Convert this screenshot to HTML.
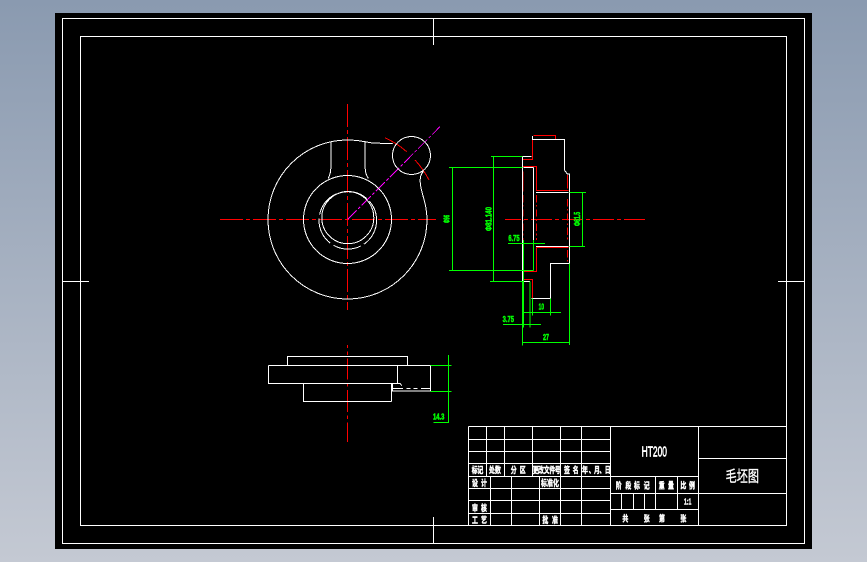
<!DOCTYPE html>
<html>
<head>
<meta charset="utf-8">
<style>
html,body{margin:0;padding:0;width:867px;height:562px;overflow:hidden;background:linear-gradient(180deg,#8a9ab0 0%,#c4c9d3 100%)}
svg{position:absolute;left:0;top:0;display:block}
.w{stroke:#fff;fill:none;stroke-width:1;shape-rendering:crispEdges}
.z{stroke-width:3}
.r{stroke:#f00;fill:none;stroke-width:3;shape-rendering:crispEdges}
.g{stroke:#0f0;fill:none;stroke-width:3;shape-rendering:crispEdges}
text{font-family:"Liberation Sans","Noto Sans CJK SC",sans-serif;font-weight:bold}
.t text,.t{fill:#fff;stroke:#fff;stroke-width:1.4;font-size:26px;text-anchor:middle}
.gt{fill:#0f0;stroke:#0f0;stroke-width:1.6;font-size:25px;text-anchor:middle}
</style>
</head>
<body>
<svg width="867" height="562" viewBox="0 0 867 562">
<rect x="55" y="13" width="757" height="536" fill="#000"/>
<g class="w">
<rect x="62.5" y="18.5" width="742" height="525"/>
<rect x="80.5" y="36.5" width="706" height="489"/>
<path d="M433.5 18.5V45M433.5 517V543.5M62.5 281.5H89M778 281.5H804.5"/>
</g>

<!-- centre lines -->
<g fill="none" stroke="#f00" stroke-width="1" shape-rendering="crispEdges">
<path d="M347.5 104V310" stroke-dasharray="23 3 4 3"/>
<path d="M220 219.5H436" stroke-dasharray="23 3 4 3"/>
<path d="M505 219.5H646" stroke-dasharray="21 3 4 3" stroke-dashoffset="5"/>
<path d="M347.5 345V442" stroke-dasharray="3 3.5 3.5 3.5 21 3.5 3.5 3.5 22 3.5 3.5 3.5 21"/>
<path d="M385 137.7A90 90 0 0 1 406.7 151.7M415 160A90 90 0 0 1 429 180"/>
</g>
<path d="M347.5 219.5L440 126.7" stroke="#f0f" fill="none" stroke-width="1" stroke-dasharray="13 2 3 2" shape-rendering="crispEdges"/>

<!-- front view -->
<g class="w">
<path d="M392.7 143.3C387 144.5 382 143 374 143C370 143 368 142 365 141.7A79.5 79.5 0 0 0 347.5 140 A79.5 79.5 0 1 0 427 219.5C427 207 423 197 421 188C419.5 181 419.5 175 423.5 171.5"/>
<path d="M330.8 141.7V168C330.8 172 330 175 328.3 178.3M365.2 141.7V168C365.2 172 366 175 368.3 178.3"/>
<circle cx="347.5" cy="219.5" r="44"/>
<circle cx="347.8" cy="217.7" r="26"/>
<circle cx="347.8" cy="220.3" r="28.8" stroke-dasharray="28 4"/>
<circle cx="411.5" cy="155.5" r="19"/>
</g>

<!-- side view -->
<g transform="translate(440 125) scale(.33333)">
<path class="r" d="M280 32H346V43H277V103H249M249 125H289V197H385M289 367H385M289 367V440H249M249 463H277V520"/>
<path class="r" d="M249 140V200M382 150V190" />
<path class="r" d="M249 210V345M289 210V345M382 222V345M382 375V412" stroke-dasharray="22 8 5 8"/>
<path class="w z" d="M277 33V43H373V135L382 147H388V415H331V520H275M247 95H275M248 95V470M280 127V345M250 127H280M288 202H385M288 364H385M250 470H270"/>
<g class="g">
<path d="M27 127H247M27 436H280M37 127V436M153 95H247M150 469H250M160 95V469"/>
<path d="M388 202H438M388 364H435M428 202V364M204 355H315M280 345V436M250 345V470"/>
<path d="M247 470V662M250 470V608M270 470V608M277 520V572M331 520V572M388 415V660"/>
<path d="M250 562H363M189 598H303M247 652H388"/>
</g>
<text class="gt" transform="translate(29 282) rotate(-90)" textLength="24" lengthAdjust="spacingAndGlyphs">Φ96</text>
<text class="gt" transform="translate(155 282) rotate(-90)" textLength="72" lengthAdjust="spacingAndGlyphs">Φ81.140</text>
<text class="gt" transform="translate(420 282) rotate(-90)" textLength="42" lengthAdjust="spacingAndGlyphs">Φ61.5</text>
<text class="gt" x="222" y="348" textLength="34" lengthAdjust="spacingAndGlyphs">6.75</text>
<text class="gt" x="304" y="554" textLength="16" lengthAdjust="spacingAndGlyphs">10</text>
<text class="gt" x="205" y="591" textLength="34" lengthAdjust="spacingAndGlyphs">3.75</text>
<text class="gt" x="318" y="645" textLength="18" lengthAdjust="spacingAndGlyphs">27</text>
</g>

<!-- bottom view -->
<g transform="translate(260 345) scale(.33333)">
<path class="w z" d="M82 60V35H442V60M25 61H512V138H397V115M25 61V115H420L425 122M413 61V115M395 115V170M130 115V169H395"/>
<path class="w z" d="M397 130H512" stroke-dasharray="32 10 12 10 12 10 30"/>
<path class="g" d="M512 61H575M512 139H575M565 30V232H520"/>
<text class="gt" x="536" y="224" textLength="34" lengthAdjust="spacingAndGlyphs">14.3</text>
</g>

<!-- title block -->
<g class="w">
<path d="M468.5 426.5H786.5M468.5 426.5V525.5M468.5 439.5H610.5M468.5 451.5H610.5M468.5 463.5H610.5M468.5 476.5H698.5M468.5 488.5H610.5M468.5 500.5H610.5M468.5 513.5H610.5"/>
<path d="M486.5 426.5V476.5M504.5 426.5V476.5M532.5 426.5V476.5M560.5 426.5V525.5M581.5 426.5V525.5M610.5 426.5V525.5"/>
<path d="M490.5 476.5V525.5M511.5 476.5V525.5M539.5 476.5V525.5"/>
<path d="M698.5 426.5V525.5M698.5 458.5H786.5M698.5 493.5H786.5"/>
<path d="M610.5 493.5H698.5M610.5 509.5H698.5M655.5 476.5V509.5M677.5 476.5V509.5M621.5 493.5V509.5M633.5 493.5V509.5M644.5 493.5V509.5"/>
</g>
<g class="t" transform="translate(465 422) scale(.33333)">
<text transform="translate(29 153) scale(.68 1)">标</text><text transform="translate(46 153) scale(.68 1)">记</text>
<text transform="translate(81 153) scale(.68 1)">处</text><text transform="translate(99 153) scale(.68 1)">数</text>
<text transform="translate(146 153) scale(.68 1)">分</text><text transform="translate(173 153) scale(.68 1)">区</text>
<text transform="translate(212 153) scale(.68 1)">更</text><text transform="translate(228 153) scale(.68 1)">改</text><text transform="translate(245 153) scale(.68 1)">文</text><text transform="translate(262 153) scale(.68 1)">件</text><text transform="translate(278 153) scale(.68 1)">号</text>
<text transform="translate(306 153) scale(.68 1)">签</text><text transform="translate(332 153) scale(.68 1)">名</text>
<text transform="translate(360 153) scale(.68 1)">年</text><text transform="translate(380 153) scale(.68 1)">、</text><text transform="translate(396 153) scale(.68 1)">月</text><text transform="translate(412 153) scale(.68 1)">、</text><text transform="translate(428 153) scale(.68 1)">日</text>
<text transform="translate(30 192) scale(.68 1)">设</text><text transform="translate(57 192) scale(.68 1)">计</text>
<text transform="translate(237 192) scale(.68 1)">标</text><text transform="translate(255 192) scale(.68 1)">准</text><text transform="translate(273 192) scale(.68 1)">化</text>
<text transform="translate(30 267) scale(.68 1)">审</text><text transform="translate(57 267) scale(.68 1)">核</text>
<text transform="translate(30 303) scale(.68 1)">工</text><text transform="translate(57 303) scale(.68 1)">艺</text>
<text transform="translate(241 303) scale(.68 1)">批</text><text transform="translate(270 303) scale(.68 1)">准</text>
</g>
<g class="t" transform="translate(605 422) scale(.33333)">
<text transform="translate(41 199) scale(.68 1)">阶</text><text transform="translate(70 199) scale(.68 1)">段</text><text transform="translate(96 199) scale(.68 1)">标</text><text transform="translate(125 199) scale(.68 1)">记</text>
<text transform="translate(170 199) scale(.68 1)">重</text><text transform="translate(198 199) scale(.68 1)">量</text>
<text transform="translate(235 199) scale(.68 1)">比</text><text transform="translate(261 199) scale(.68 1)">例</text>
<text x="248" y="247" textLength="22" lengthAdjust="spacingAndGlyphs" style="font-size:24px">1:1</text>
<text transform="translate(61 298) scale(.68 1)">共</text><text transform="translate(125 298) scale(.68 1)">张</text><text transform="translate(171 298) scale(.68 1)">第</text><text transform="translate(235 298) scale(.68 1)">张</text>
<text x="148" y="104" textLength="76" lengthAdjust="spacingAndGlyphs" style="font-size:44px;font-weight:normal;stroke-width:2">HT200</text>
<text x="412" y="178" textLength="100" lengthAdjust="spacingAndGlyphs" style="font-size:46px;font-weight:normal;stroke-width:1">毛坯图</text>
</g>
</svg>
</body>
</html>
